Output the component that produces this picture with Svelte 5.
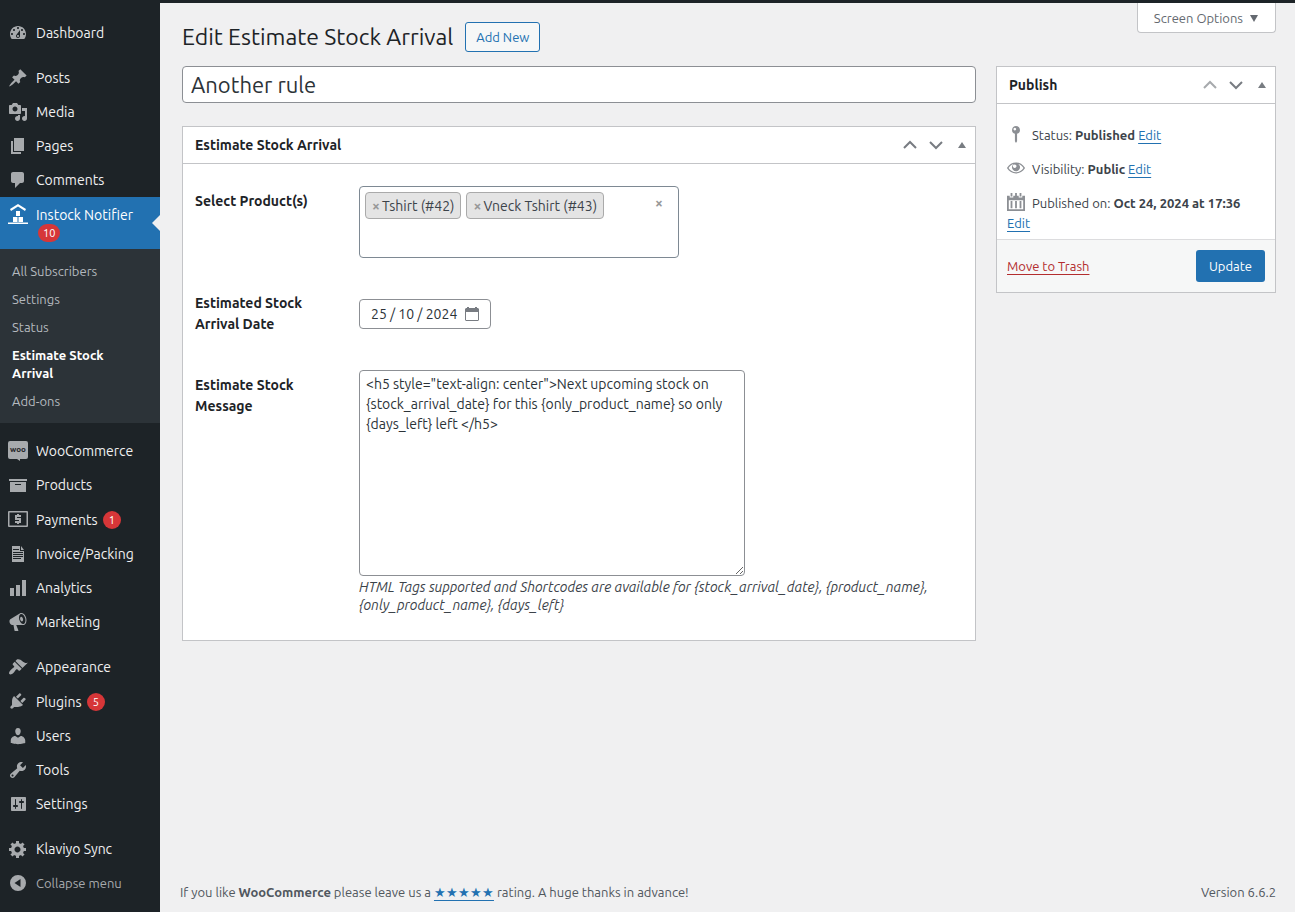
<script>
  const icons = {
    dashboard:
      'M3.76 16h12.48c1.1-1.37 1.76-3.11 1.76-5 0-4.42-3.58-8-8-8s-8 3.58-8 8c0 1.89.66 3.63 1.76 5zM10 4c.55 0 1 .45 1 1s-.45 1-1 1-1-.45-1-1 .45-1 1-1zM6 6c.55 0 1 .45 1 1s-.45 1-1 1-1-.45-1-1 .45-1 1-1zm8 0c.55 0 1 .45 1 1s-.45 1-1 1-1-.45-1-1 .45-1 1-1zm-5.37 5.55L12 7v6c0 1.1-.9 2-2 2s-2-.9-2-2c0-.57.24-1.08.63-1.45zM4 10c.55 0 1 .45 1 1s-.45 1-1 1-1-.45-1-1 .45-1 1-1zm12 0c.55 0 1 .45 1 1s-.45 1-1 1-1-.45-1-1 .45-1 1-1zm-5 3c0-.55-.45-1-1-1s-1 .45-1 1 .45 1 1 1 1-.45 1-1z',
    post: 'M10.44 3.02l1.82-1.82 6.36 6.35-1.83 1.82c-1.05-.68-2.48-.57-3.41.36l-.75.75c-.92.93-1.04 2.35-.35 3.41l-1.83 1.82-2.41-2.41-2.8 2.79c-.42.42-3.38 2.71-3.8 2.29s1.86-3.39 2.28-3.81l2.79-2.79L4.1 9.36l1.83-1.82c1.05.69 2.48.57 3.4-.36l.75-.75c.93-.92 1.05-2.35.36-3.41z',
    media:
      'M13 11V4c0-.55-.45-1-1-1h-1.67L9 1H5L3.67 3H2c-.55 0-1 .45-1 1v7c0 .55.45 1 1 1h10c.55 0 1-.45 1-1zM7 4.5c1.38 0 2.5 1.12 2.5 2.5S8.38 9.5 7 9.5 4.5 8.38 4.5 7 5.62 4.5 7 4.5zM14 6h5v10.5c0 1.38-1.12 2.5-2.5 2.5S14 17.88 14 16.5s1.12-2.5 2.5-2.5c.17 0 .34.02.5.05V9h-3V6zm-4 8.05V13h2v3.5c0 1.38-1.12 2.5-2.5 2.5S7 17.88 7 16.5 8.12 14 9.5 14c.17 0 .34.02.5.05z',
    page: 'M6 15V2h10v13H6zm-1 1h8v2H3V5h2v11z',
    comment:
      'M5 2h9c1.1 0 2 .9 2 2v7c0 1.1-.9 2-2 2h-2l-5 5v-5H5c-1.1 0-2-.9-2-2V4c0-1.1.9-2 2-2z',
    instock:
      'M10 0l8 5-1 2-7-4.4L3 7 2 5zM8 7h4v5H8zM5 13h4.5v5H5zM10.5 13H15v5h-4.5zM0 18.5h20V20H0z',
    products: 'M19 4v2H1V4h18zM2 7h16v10H2V7zm11 3V9H7v1h6z',
    invoice:
      'M4 2h8v5h4v11H4zM13 2l3 4h-3zM5 5v1h6V5zM5 8v1h10V8zM5 10v1h10v-1zM5 12v1h10v-1zM5 14v1h8v-1z',
    analytics: 'M18 18V2h-4v16h4zm-6 0V7H8v11h4zm-6 0v-8H2v8h4z',
    marketing:
      'M18.15 5.94c.46 1.62.38 3.22-.02 4.48-.42 1.28-1.26 2.18-2.3 2.48-.16.06-.26.06-.4.06-.06.02-.12.02-.18.02-.06.02-.14.02-.22.02h-6.8l2.22 5.5c.02.14-.06.26-.14.34-.08.1-.24.16-.34.16H6.95c-.1 0-.26-.06-.34-.16-.08-.08-.16-.2-.14-.34l-1-5.5H4.25l-.02-.02c-.5.06-1.08-.18-1.54-.62s-.88-1.08-1.06-1.88c-.24-.8-.2-1.56-.02-2.2.18-.62.58-1.08 1.06-1.3l.02-.02 9-5.4c.1-.06.18-.1.24-.16.06-.04.14-.08.24-.12.16-.08.28-.12.5-.18 1.04-.3 2.24.1 3.22.98s1.84 2.24 2.26 3.86zm-2.58 5.98h-.02c.4-.1.74-.34 1.04-.7.58-.7.86-1.76.86-3.04 0-.64-.1-1.3-.28-1.98-.34-1.36-1.02-2.5-1.78-3.24s-1.68-1.1-2.46-.88c-.82.22-1.4.96-1.7 2-.32 1.04-.28 2.36.06 3.72.38 1.36 1 2.5 1.8 3.24.78.74 1.62 1.1 2.48.88zm-2.54-7.08c.22-.04.42-.02.62.04.38.16.76.48 1.02 1s.42 1.2.42 1.78c0 .3-.04.56-.12.8-.18.48-.44.84-.86.94-.34.1-.8-.06-1.14-.4s-.64-.86-.78-1.5c-.18-.62-.12-1.24.02-1.72s.48-.84.82-.94z',
    appearance:
      'M14.48 11.06L7.41 3.99l1.5-1.5c.5-.56 2.3-.47 3.51.32 1.21.8 1.43 1.28 2.91 2.1 1.18.64 2.45 1.26 4.45.85zm-.71.71L6.7 4.7 4.93 6.47c-.39.39-.39 1.02 0 1.41l1.06 1.06c.39.39.39 1.03 0 1.42-.6.6-1.43 1.11-2.21 1.69-.35.26-.7.53-1.01.84C1.43 14.23.4 16.08 1.4 17.07c.99 1 2.84-.03 4.18-1.36.31-.31.58-.66.85-1.02.57-.78 1.08-1.61 1.69-2.21.39-.39 1.02-.39 1.41 0l1.06 1.06c.39.39 1.02.39 1.41 0z',
    plugins:
      'M13.11 4.36L9.87 7.6 8 5.73l3.24-3.24c.35-.34 1.05-.2 1.56.32.52.51.66 1.21.31 1.55zm-8 1.77l.91-1.12 9.01 9.01-1.19.84c-.71.71-2.63 1.16-3.82 1.16H6.14L4.9 17.26c-.59.59-1.54.59-2.12 0-.59-.58-.59-1.53 0-2.12l1.24-1.24v-3.88c0-1.13.4-3.19 1.09-3.89zm7.26 3.97l3.24-3.24c.34-.35 1.04-.21 1.55.31.52.51.66 1.21.31 1.55l-3.24 3.25z',
    users:
      'M10 9.25c-2.27 0-2.73-3.44-2.73-3.44C7 4.02 7.82 2 9.97 2c2.16 0 2.98 2.02 2.71 3.81 0 0-.41 3.44-2.68 3.44zm0 2.57L12.72 10c2.39 0 4.52 2.33 4.52 4.53v2.49s-3.65 1.13-7.24 1.13c-3.65 0-7.24-1.13-7.24-1.13v-2.49c0-2.25 1.94-4.48 4.47-4.48z',
    tools:
      'M16.68 9.77c-1.34 1.34-3.3 1.67-4.95.99l-5.41 6.52c-.99.99-2.59.99-3.58 0s-.99-2.59 0-3.57l6.52-5.42c-.68-1.65-.35-3.61.99-4.95 1.28-1.28 3.12-1.62 4.72-1.06l-2.89 2.89 2.82 2.82 2.86-2.87c.53 1.58.18 3.39-1.08 4.65zM3.81 16.21c.4.39 1.04.39 1.43 0 .4-.4.4-1.04 0-1.43-.39-.4-1.03-.4-1.43 0-.39.39-.39 1.03 0 1.43z',
    settings:
      'M18 16V4c0-.55-.45-1-1-1H4c-.55 0-1 .45-1 1v12c0 .55.45 1 1 1h13c.55 0 1-.45 1-1zM8 11h1c.55 0 1 .45 1 1s-.45 1-1 1H8v1.5c0 .28-.22.5-.5.5s-.5-.22-.5-.5V13H6c-.55 0-1-.45-1-1s.45-1 1-1h1V5.5c0-.28.22-.5.5-.5s.5.22.5.5V11zm5-2h-1c-.55 0-1-.45-1-1s.45-1 1-1h1V5.5c0-.28.22-.5.5-.5s.5.22.5.5V7h1c.55 0 1 .45 1 1s-.45 1-1 1h-1v5.5c0 .28-.22.5-.5.5s-.5-.22-.5-.5V9z',
    gear: 'M18 12h-2.18c-.17.7-.44 1.35-.81 1.93l1.54 1.54-2.1 2.1-1.54-1.54c-.58.36-1.23.63-1.91.79V19H8v-2.18c-.68-.16-1.33-.43-1.91-.79l-1.54 1.54-2.12-2.12 1.54-1.54c-.36-.58-.63-1.23-.79-1.91H1V9.03h2.17c.16-.7.44-1.35.8-1.94L2.43 5.55l2.1-2.1 1.54 1.54c.58-.37 1.24-.64 1.93-.81V2h3v2.18c.68.16 1.33.43 1.91.79l1.54-1.54 2.12 2.12-1.54 1.54c.36.59.64 1.24.8 1.94H18V12zm-8.5 1.5c1.66 0 3-1.34 3-3s-1.34-3-3-3-3 1.34-3 3 1.34 3 3 3z',
    collapse: 'M10 2a8 8 0 1 0 0 16 8 8 0 1 0 0-16zM12.5 6v8L6.500 10z',
    visibility:
      'M19.7 9.4C17.7 6 14 3.9 10 3.9S2.3 6 .3 9.4L0 10l.3.6c2 3.4 5.7 5.5 9.7 5.5s7.7-2.1 9.7-5.5l.3-.6-.3-.6zM10 14.700c-3.400 0-6.600-1.900-8.300-4.700C2.800 8 5.200 6 7.500 5.500c-1.200.8-2 2.200-2 3.700 0 2.500 2 4.500 4.500 4.500s4.500-2 4.500-4.500c0-1.500-.8-2.900-2-3.700 2.300.5 4.700 2.500 5.800 4.500-1.700 2.800-4.900 4.700-8.300 4.700zM8.500 6a2 2 0 1 0 .01 0z',
    pin: 'M10 1a4.5 4.5 0 0 0-1.2 8.800V18l1.200 2 1.200-2V9.800A4.500 4.500 0 0 0 10 1zM8.700 3a1.500 1.500 0 1 1-.01 0z',
    calendar:
      'M4 0h2v4H4zM14 0h2v4h-2zM9 0h2v3H9zM0 3h3v2h4V3h6v2h4V3h3v17H0zM2 8v10h16V8zM4 9h2v8H4zM9 9h2v8H9zM14 9h2v8h-2z',
  }

  const menu = [
    [{ label: 'Dashboard', icon: 'dashboard' }],
    [
      { label: 'Posts', icon: 'post' },
      { label: 'Media', icon: 'media' },
      { label: 'Pages', icon: 'page' },
      { label: 'Comments', icon: 'comment' },
      {
        label: 'Instock Notifier',
        icon: 'instock',
        count: 10,
        children: [
          'All Subscribers',
          'Settings',
          'Status',
          'Estimate Stock Arrival',
          'Add-ons',
        ],
      },
    ],
    [
      { label: 'WooCommerce', icon: 'woo' },
      { label: 'Products', icon: 'products' },
      { label: 'Payments', icon: 'payments', count: 1 },
      { label: 'Invoice/Packing', icon: 'invoice' },
      { label: 'Analytics', icon: 'analytics' },
      { label: 'Marketing', icon: 'marketing' },
    ],
    [
      { label: 'Appearance', icon: 'appearance' },
      { label: 'Plugins', icon: 'plugins', count: 5 },
      { label: 'Users', icon: 'users' },
      { label: 'Tools', icon: 'tools' },
      { label: 'Settings', icon: 'settings' },
    ],
    [{ label: 'Klaviyo Sync', icon: 'gear' }],
  ]

  let title = $state('Another rule')
  let products = $state(['Tshirt (#42)', 'Vneck Tshirt (#43)'])
  let arrival = $state('25 / 10 / 2024')
  let message = $state(
    '<h5 style="text-align: center">Next upcoming stock on {stock_arrival_date} for this {only_product_name} so only {days_left} left </h5>'
  )
</script>

{#snippet icon(name)}
  <svg class="icon" viewBox="0 0 20 20" aria-hidden="true">
    {#if name === 'woo'}
      <path d="M2 0h16a2 2 0 0 1 2 2v14a2 2 0 0 1-2 2h-6v2l-3-2H2a2 2 0 0 1-2-2V2a2 2 0 0 1 2-2z" />
      <text class="woo" x="10" y="11" text-anchor="middle">woo</text>
    {:else if name === 'payments'}
      <path fill-rule="evenodd" d="M1 2h18a1 1 0 0 1 1 1v14a1 1 0 0 1-1 1H1a1 1 0 0 1-1-1V3a1 1 0 0 1 1-1zM1.500 3.500v13h17v-13z" />
      <path class="dollar" d="M10 5v2M10 13v2M13 7H8v3h4v3H7" />
    {:else}
      <path fill-rule="evenodd" d={icons[name]} />
    {/if}
  </svg>
{/snippet}

{#snippet boxActions(first)}
  <div class="actions">
    <button type="button" aria-label="Move up" disabled={first}>
      <svg viewBox="0 0 20 20"><path class="chevron" d="M4 13l6-6 6 6" /></svg>
    </button>
    <button type="button" aria-label="Move down">
      <svg viewBox="0 0 20 20"><path class="chevron" d="M4 7l6 6 6-6" /></svg>
    </button>
    <button type="button" aria-label="Toggle panel">
      <svg viewBox="0 0 20 20"><path d="M6 13l4-6 4 6z" /></svg>
    </button>
  </div>
{/snippet}

<div class="admin">
  <nav class="sidebar" aria-label="Main menu">
    {#each menu as group}
      <ul class="group">
        {#each group as item}
          <li>
            <a
              href="#top"
              class="item"
              class:current={item.children}
              class:counted={item.count}>
              {@render icon(item.icon)}
              <span class="name">
                {item.label}
                {#if item.count}<span class="count">{item.count}</span>{/if}
              </span>
            </a>
            {#if item.children}
              <ul class="submenu">
                {#each item.children as child}
                  <li>
                    <a href="#top" class:active={child === 'Estimate Stock Arrival'}>{child}</a>
                  </li>
                {/each}
              </ul>
            {/if}
          </li>
        {/each}
      </ul>
    {/each}
    <button type="button" class="item collapse">
      {@render icon('collapse')}
      <span class="name">Collapse menu</span>
    </button>
  </nav>

  <div class="content">
    <header class="top">
      <div class="heading">
        <h1>Edit Estimate Stock Arrival</h1>
        <a href="#top" class="add-new">Add New</a>
      </div>
      <button type="button" class="screen-options">
        Screen Options
        <svg viewBox="0 0 10 10" aria-hidden="true"><path d="M1 2h8L5 9z" /></svg>
      </button>
    </header>

    <div class="columns">
      <main>
        <input class="title" type="text" aria-label="Title" bind:value={title} />

        <section class="box">
          <div class="box-header">
            <h2>Estimate Stock Arrival</h2>
            {@render boxActions(false)}
          </div>
          <div class="form">
            <div class="row">
              <label for="products">Select Product(s)</label>
              <div class="picker">
                <div class="tags">
                  {#each products as product}
                    <span class="tag">
                      <button
                        type="button"
                        aria-label="Remove {product}"
                        onclick={() => (products = products.filter((p) => p !== product))}>×</button>{product}
                    </span>
                  {/each}
                  <input id="products" type="text" />
                </div>
                <button
                  type="button"
                  class="clear"
                  aria-label="Remove all items"
                  onclick={() => (products = [])}>×</button>
              </div>
            </div>
            <div class="row middle">
              <label for="arrival">Estimated Stock Arrival Date</label>
              <div class="date">
                <input id="arrival" type="text" bind:value={arrival} />
                <button type="button" aria-label="Show calendar">
                  <svg viewBox="0 0 14 14">
                    <path fill-rule="evenodd" d="M1 1h1V0h2v1h6V0h2v1h1l1 1v11l-1 1H1l-1-1V2zM1 5v8h12V5z" />
                  </svg>
                </button>
              </div>
            </div>
            <div class="row">
              <label for="message">Estimate Stock Message</label>
              <div>
                <textarea id="message" bind:value={message}></textarea>
                <p class="description">
                  HTML Tags supported and Shortcodes are available for
                  {'{stock_arrival_date}, {product_name}, {only_product_name}, {days_left}'}
                </p>
              </div>
            </div>
          </div>
        </section>
      </main>

      <aside class="box">
        <div class="box-header">
          <h2>Publish</h2>
          {@render boxActions(true)}
        </div>
        <div class="publish">
          <p>{@render icon('pin')}Status: <b>Published</b> <a href="#top">Edit</a></p>
          <p>{@render icon('visibility')}Visibility: <b>Public</b> <a href="#top">Edit</a></p>
          <p>
            {@render icon('calendar')}Published on: <b>Oct 24, 2024 at 17:36</b>
            <a href="#top">Edit</a>
          </p>
        </div>
        <div class="publish-actions">
          <a href="#top" class="trash">Move to Trash</a>
          <button type="button" class="update">Update</button>
        </div>
      </aside>
    </div>

    <footer>
      <span>
        If you like <b>WooCommerce</b> please leave us a
        <a href="#top" aria-label="five star">★★★★★</a> rating. A huge thanks in advance!
      </span>
      <span>Version 6.6.2</span>
    </footer>
  </div>
</div>

<style>
  :global(body) {
    background: #f0f0f1;
    color: #3c434a;
    font: 13px/20px Ubuntu, 'Noto Sans', sans-serif;
  }
  .admin,
  .admin * {
    box-sizing: border-box;
  }
  .admin {
    display: flex;
    min-height: 100vh;
    border-top: 3px solid #1d2327;
  }
  ul {
    list-style: none;
    margin: 0;
    padding: 0;
  }
  button,
  input,
  textarea {
    font: inherit;
    color: inherit;
  }
  button {
    padding: 0;
    border: 0;
    background: none;
    cursor: pointer;
  }
  a {
    color: #2271b1;
    text-underline-offset: 3px;
  }
  svg {
    fill: currentColor;
  }
  .icon {
    flex: none;
    width: 20px;
    height: 20px;
    color: #a7aaad;
  }
  .woo {
    fill: #1d2327;
    font-size: 8px;
    font-weight: 700;
  }
  .dollar {
    fill: none;
    stroke: currentColor;
    stroke-width: 2;
  }

  .sidebar {
    flex: none;
    width: 160px;
    padding-top: 13px;
    background: #1d2327;
  }
  .group {
    margin-bottom: 11px;
  }
  .group:last-of-type {
    margin: 0;
  }
  .item {
    display: flex;
    position: relative;
    width: 100%;
    min-height: 34px;
    padding-left: 8px;
    gap: 8px;
    color: #f0f0f1;
    text-align: left;
    text-decoration: none;
  }
  .item .icon {
    margin-top: 7px;
  }
  .name {
    padding: 8px 8px 8px 0;
    font-size: 14px;
    line-height: 18px;
  }
  .counted .name {
    padding: 9px 8px 8px 0;
  }
  .current .name {
    padding-bottom: 7px;
  }
  .count {
    display: inline-block;
    min-width: 18px;
    height: 18px;
    margin-left: 2px;
    padding: 0 5px;
    border-radius: 9px;
    background: #d63638;
    color: #fff;
    font-size: 11px;
    text-align: center;
    vertical-align: top;
  }
  .current {
    background: #2271b1;
    color: #fff;
  }
  .current .icon {
    color: #fff;
  }
  .current:after {
    content: '';
    position: absolute;
    right: 0;
    top: 18px;
    border: 8px solid transparent;
    border-right-color: #f0f0f1;
    border-left-width: 0;
  }
  .submenu {
    padding: 8px 0;
    background: #2c3338;
  }
  .submenu a {
    display: block;
    padding: 5px 40px 5px 12px;
    color: #b4b9be;
    line-height: 18px;
    text-decoration: none;
  }
  .submenu .active {
    color: #fff;
    font-weight: 600;
  }
  .collapse {
    color: #a7aaad;
  }
  .collapse .name {
    font-size: 13px;
  }

  .content {
    display: flex;
    flex: 1;
    flex-direction: column;
    min-width: 0;
    padding: 0 19px 0 22px;
  }
  .top {
    display: flex;
    align-items: flex-start;
    justify-content: space-between;
    height: 63px;
  }
  .heading {
    display: flex;
    align-items: center;
    gap: 12px;
    padding-top: 19px;
  }
  h1 {
    margin: 0;
    color: #1d2327;
    font-size: 23px;
    font-weight: 400;
    line-height: 30px;
  }
  .add-new {
    padding: 0 10px;
    border: 1px solid #2271b1;
    border-radius: 3px;
    background: #f6f7f7;
    line-height: 28px;
    text-decoration: none;
  }
  .screen-options {
    height: 30px;
    padding: 0 16px;
    border: 1px solid #c3c4c7;
    border-top: 0;
    border-radius: 0 0 4px 4px;
    background: #fff;
    color: #646970;
  }
  .screen-options svg {
    width: 10px;
    height: 10px;
    margin-left: 3px;
  }
  .columns {
    display: flex;
    align-items: flex-start;
    gap: 20px;
  }
  main {
    flex: 1;
    min-width: 0;
  }
  .title {
    display: block;
    width: 100%;
    height: 37px;
    margin-bottom: 23px;
    padding: 0 8px;
    border: 1px solid #8c8f94;
    border-radius: 4px;
    background: #fff;
    color: #2c3338;
    font-size: 22px;
  }
  .box {
    border: 1px solid #c3c4c7;
    background: #fff;
  }
  .box-header {
    display: flex;
    align-items: center;
    justify-content: space-between;
    height: 37px;
    padding-left: 12px;
    border-bottom: 1px solid #c3c4c7;
  }
  h2 {
    margin: 0;
    color: #1d2327;
    font-size: 14px;
    font-weight: 600;
  }
  .actions {
    display: flex;
    color: #787c82;
  }
  .actions button {
    display: flex;
    align-items: center;
    justify-content: center;
    width: 26px;
    height: 36px;
  }
  .actions button:disabled {
    color: #a7aaad;
  }
  .actions svg {
    width: 20px;
    height: 20px;
  }
  .chevron {
    fill: none;
    stroke: currentColor;
    stroke-width: 2;
  }

  .form {
    display: flex;
    flex-direction: column;
    gap: 35px;
    padding: 22px 12px 26px;
    font-size: 14px;
  }
  .row {
    display: grid;
    grid-template-columns: 134px 1fr;
    align-items: start;
    gap: 30px;
  }
  .row label {
    padding-top: 5px;
    color: #1d2327;
    font-weight: 600;
    line-height: 21px;
  }
  .middle {
    align-items: center;
  }
  .middle label {
    padding: 0;
  }
  .picker {
    display: flex;
    align-items: flex-start;
    width: 320px;
    min-height: 72px;
    padding: 5px;
    border: 1px solid #7e8993;
    border-radius: 4px;
  }
  .tags {
    display: flex;
    flex: 1;
    flex-wrap: wrap;
    gap: 5px;
  }
  .tag {
    height: 27px;
    padding: 0 6px;
    border: 1px solid #aaa;
    border-radius: 4px;
    background: #e4e4e4;
    line-height: 26px;
    white-space: nowrap;
  }
  .tag button,
  .clear {
    color: #999;
    font-weight: 700;
  }
  .tag button {
    margin-right: 2px;
  }
  .tags input {
    width: 10px;
    height: 27px;
    padding: 0;
    border: 0;
    outline: 0;
    background: none;
  }
  .clear {
    margin: 1px 10px 0 0;
  }
  .date {
    display: flex;
    align-items: center;
    justify-self: start;
    width: 132px;
    height: 30px;
    padding: 0 11px;
    border: 1px solid #8c8f94;
    border-radius: 4px;
    color: #2c3338;
  }
  .date input {
    flex: 1;
    min-width: 0;
    padding: 0;
    border: 0;
    outline: 0;
    background: none;
  }
  .date button {
    display: flex;
    color: #787c82;
  }
  .date svg {
    width: 14px;
    height: 14px;
  }
  textarea {
    display: block;
    width: 386px;
    max-width: 100%;
    height: 206px;
    padding: 3px 6px;
    border: 1px solid #8c8f94;
    border-radius: 4px;
    color: #2c3338;
  }
  .description {
    margin: 2px 0 0;
    font-style: italic;
    line-height: 18px;
  }

  .publish {
    padding-top: 15px;
  }
  .publish p {
    margin: 0;
    padding: 6px 10px 8px;
  }
  .publish p:last-child {
    padding-bottom: 6px;
  }
  .publish .icon {
    width: 18px;
    height: 18px;
    margin-right: 7px;
    color: #8c8f94;
    vertical-align: top;
  }
  b {
    font-weight: 600;
  }
  aside {
    width: 280px;
  }
  .publish-actions {
    display: flex;
    align-items: center;
    justify-content: space-between;
    padding: 10px;
    border-top: 1px solid #dcdcde;
    background: #f6f7f7;
  }
  .trash {
    color: #b32d2e;
  }
  .update {
    height: 32px;
    padding: 0 13px;
    border-radius: 3px;
    background: #2271b1;
    color: #fff;
  }
  footer {
    display: flex;
    justify-content: space-between;
    margin: auto 0 0 -2px;
    padding: 10px 0;
    color: #50575e;
  }
</style>
